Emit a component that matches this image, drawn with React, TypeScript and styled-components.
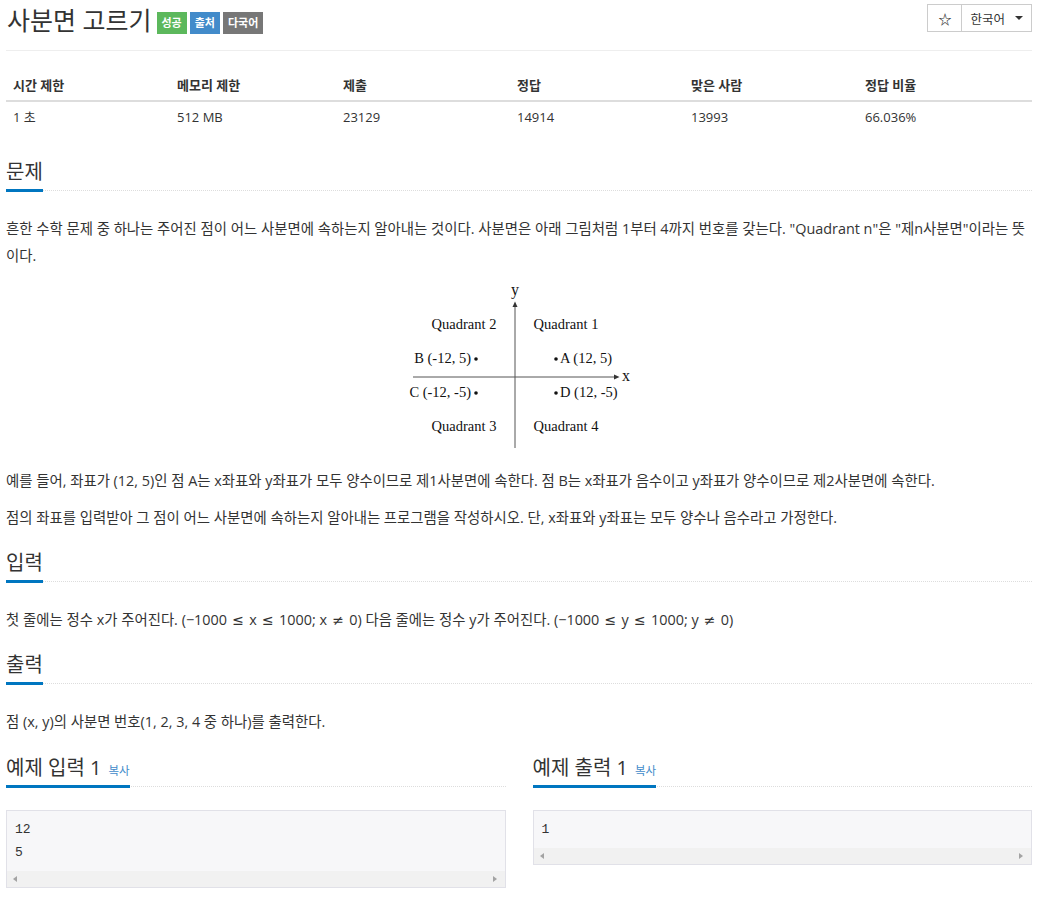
import styled, { createGlobalStyle } from 'styled-components'

const GlobalStyle = createGlobalStyle`
  html, body {
    margin: 0;
    padding: 0;
    background: #fff;
  }
  body {
    font-family: 'Open Sans', 'Noto Sans CJK KR', sans-serif;
    font-size: 14.4px;
    color: #333;
  }
`

const Page = styled.div`
  padding: 2px 10px 0 6px;
`

const Header = styled.div`
  display: flex;
  justify-content: space-between;
  align-items: flex-start;
  padding-bottom: 12px;
  border-bottom: 1px solid #eee;
`

const TitleRow = styled.div`
  display: flex;
  align-items: center;
  gap: 3px;
`

const Title = styled.h1`
  margin: 0 2px 0 1px;
  font-size: 25px;
  line-height: 36px;
  font-weight: 400;
  color: #333;
`

const Label = styled.span<{ $bg: string }>`
  display: inline-block;
  margin-top: 6px;
  padding: 0 5px;
  height: 22px;
  line-height: 22px;
  font-size: 11px;
  font-weight: 700;
  color: #fff;
  background: ${p => p.$bg};
`

const BtnGroup = styled.div`
  display: flex;
  margin-top: 2px;
`

const Btn = styled.div<{ $first?: boolean }>`
  display: flex;
  align-items: center;
  height: 26px;
  padding: 0 ${p => (p.$first ? '10px' : '8px')};
  border: 1px solid #ccc;
  margin-left: ${p => (p.$first ? '0' : '-1px')};
  font-size: ${p => (p.$first ? '13px' : '12.5px')};
  font-weight: ${p => (p.$first ? 700 : 400)};
  color: #333;
  background: #fff;
`

const Caret = styled.span`
  width: 0;
  height: 0;
  border-left: 4px solid transparent;
  border-right: 4px solid transparent;
  border-top: 4px solid #333;
  margin-left: 10px;
`

const InfoTable = styled.table`
  width: 100%;
  margin-top: 19px;
  margin-bottom: 26px;
  border-collapse: collapse;
  table-layout: fixed;
  font-size: 13px;

  th {
    text-align: left;
    font-weight: 700;
    padding: 6px 7px;
    line-height: 18px;
    border-bottom: 2px solid #ddd;
  }

  td {
    padding: 6px 7px;
    line-height: 18px;
  }
`

const Section = styled.section`
  margin-top: 17.5px;
`

const Headline = styled.div<{ $gap?: number }>`
  border-bottom: 1px dotted #ddd;
  margin-bottom: ${p => p.$gap ?? 24}px;
`

const HeadlineText = styled.h2`
  display: inline-block;
  margin: 0 0 -2px;
  padding-bottom: 3px;
  font-size: 20px;
  line-height: 28px;
  font-weight: 400;
  color: #333;
  border-bottom: 3px solid #0076c0;
`

const CopyLink = styled.span`
  font-size: 11.5px;
  line-height: 1;
  color: #428bca;
  margin-left: 7px;
`

const Para = styled.p`
  margin: 0 0 10px;
  line-height: 27px;
`

const MathSym = styled.span`
  font-family: 'DejaVu Sans', sans-serif;
  font-size: 14px;
  margin: 0 1.5px;
`

const Figure = styled.div`
  display: flex;
  justify-content: center;
  margin: 5px 0 15px;
`

const SampleRow = styled.div`
  display: grid;
  grid-template-columns: 1fr 1fr;
  gap: 27px;
  margin-top: 19px;
`

const SampleBox = styled.div`
  border: 1px solid #e1e1e8;
  background: #f7f7f9;
`

const SampleText = styled.pre`
  margin: 0;
  padding: 7px 8px 7px;
  font-family: 'Liberation Mono', 'DejaVu Sans Mono', monospace;
  font-size: 13px;
  line-height: 23px;
  color: #333;
`

const ScrollBar = styled.div`
  display: flex;
  justify-content: space-between;
  align-items: center;
  height: 16px;
  padding: 0 8px 0 6px;
  background: #f1f1f1;
`

const Arrow = styled.span<{ $dir: 'left' | 'right' }>`
  width: 0;
  height: 0;
  border-top: 3.5px solid transparent;
  border-bottom: 3.5px solid transparent;
  ${p => (p.$dir === 'left' ? 'border-right: 4px solid #a3a3a3;' : 'border-left: 4px solid #a3a3a3;')}
`

const QuadrantFigure = () => (
  <svg width="224" height="173" viewBox="0 -4 224 173" fontFamily="'Liberation Serif', 'Times New Roman', serif" fontSize="14.5" fill="#111">
    <line x1="108" y1="21" x2="108" y2="165" stroke="#555" strokeWidth="1" />
    <path d="M105.5 24 L108 18.5 L110.5 24 Z" fill="#333" />
    <line x1="6" y1="94" x2="210" y2="94" stroke="#555" strokeWidth="1" />
    <path d="M207 91.5 L212.5 94 L207 96.5 Z" fill="#333" />
    <text x="108" y="12" textAnchor="middle" fontSize="16">y</text>
    <text x="215" y="98" fontSize="16">x</text>
    <text x="57" y="46" textAnchor="middle">Quadrant 2</text>
    <text x="159" y="46" textAnchor="middle">Quadrant 1</text>
    <text x="57" y="148" textAnchor="middle">Quadrant 3</text>
    <text x="159" y="148" textAnchor="middle">Quadrant 4</text>
    <text x="64" y="80" textAnchor="end">B (-12, 5)</text>
    <circle cx="69" cy="76" r="1.8" />
    <circle cx="149" cy="76" r="1.8" />
    <text x="153" y="80">A (12, 5)</text>
    <text x="64" y="114" textAnchor="end">C (-12, -5)</text>
    <circle cx="69" cy="110" r="1.8" />
    <circle cx="149" cy="110" r="1.8" />
    <text x="153" y="114">D (12, -5)</text>
  </svg>
)

const stats = [
  ['시간 제한', '1 초', 164],
  ['메모리 제한', '512 MB', 166],
  ['제출', '23129', 174],
  ['정답', '14914', 174],
  ['맞은 사람', '13993', 174],
  ['정답 비율', '66.036%', 174],
] as const

const Sample = ({ title, text }: { title: string; text: string }) => (
  <div>
    <Headline $gap={23}>
      <HeadlineText>
        {title}
        <CopyLink>복사</CopyLink>
      </HeadlineText>
    </Headline>
    <SampleBox>
      <SampleText>{text}</SampleText>
      <ScrollBar>
        <Arrow $dir="left" />
        <Arrow $dir="right" />
      </ScrollBar>
    </SampleBox>
  </div>
)

export default function App() {
  return (
    <Page>
      <GlobalStyle />
      <Header>
        <TitleRow>
          <Title>사분면 고르기</Title>
          <Label $bg="#5cb85c">성공</Label>
          <Label $bg="#428bca">출처</Label>
          <Label $bg="#777">다국어</Label>
        </TitleRow>
        <BtnGroup>
          <Btn $first>☆</Btn>
          <Btn>
            한국어
            <Caret />
          </Btn>
        </BtnGroup>
      </Header>

      <InfoTable>
        <colgroup>
          {stats.map(([h, , w]) => (
            <col key={h} style={{ width: w }} />
          ))}
        </colgroup>
        <thead>
          <tr>
            {stats.map(([h]) => (
              <th key={h}>{h}</th>
            ))}
          </tr>
        </thead>
        <tbody>
          <tr>
            {stats.map(([h, v]) => (
              <td key={h}>{v}</td>
            ))}
          </tr>
        </tbody>
      </InfoTable>

      <Section>
        <Headline>
          <HeadlineText>문제</HeadlineText>
        </Headline>
        <Para>
          흔한 수학 문제 중 하나는 주어진 점이 어느 사분면에 속하는지 알아내는 것이다. 사분면은 아래 그림처럼 1부터 4까지 번호를 갖는다. "Quadrant n"은 "제n사분면"이라는 뜻이다.
        </Para>
        <Figure>
          <QuadrantFigure />
        </Figure>
        <Para>예를 들어, 좌표가 (12, 5)인 점 A는 x좌표와 y좌표가 모두 양수이므로 제1사분면에 속한다. 점 B는 x좌표가 음수이고 y좌표가 양수이므로 제2사분면에 속한다.</Para>
        <Para>점의 좌표를 입력받아 그 점이 어느 사분면에 속하는지 알아내는 프로그램을 작성하시오. 단, x좌표와 y좌표는 모두 양수나 음수라고 가정한다.</Para>
      </Section>

      <Section>
        <Headline>
          <HeadlineText>입력</HeadlineText>
        </Headline>
        <Para>
          첫 줄에는 정수 x가 주어진다. (−1000 <MathSym>≤</MathSym> x <MathSym>≤</MathSym> 1000; x <MathSym>≠</MathSym> 0) 다음 줄에는 정수 y가 주어진다. (−1000 <MathSym>≤</MathSym> y <MathSym>≤</MathSym> 1000; y <MathSym>≠</MathSym> 0)
        </Para>
      </Section>

      <Section>
        <Headline>
          <HeadlineText>출력</HeadlineText>
        </Headline>
        <Para>점 (x, y)의 사분면 번호(1, 2, 3, 4 중 하나)를 출력한다.</Para>
      </Section>

      <SampleRow>
        <Sample title="예제 입력 1" text={'12\n5'} />
        <Sample title="예제 출력 1" text="1" />
      </SampleRow>
    </Page>
  )
}
